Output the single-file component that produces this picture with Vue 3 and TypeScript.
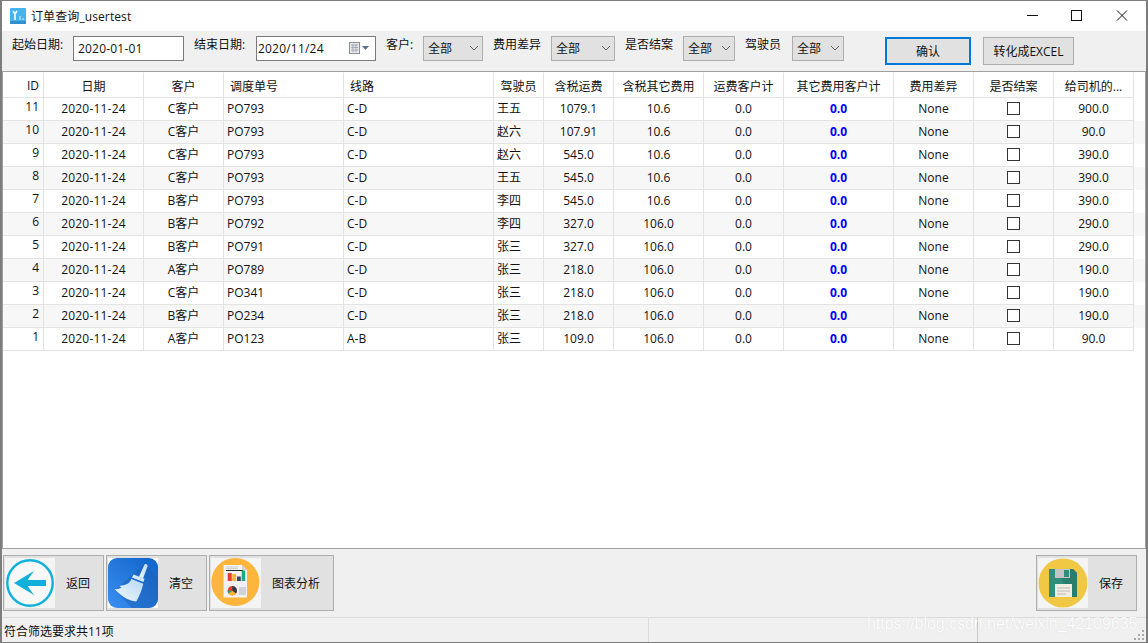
<script setup lang="ts">
interface Row { id: number; cust: string; po: string; route: string; driver: string; fee: string; other: string; pay: string }
const heads: string[] = ['ID', '日期', '客户', '调度单号', '线路', '驾驶员', '含税运费', '含税其它费用', '运费客户计', '其它费用客户计', '费用差异', '是否结案', '给司机的...']
const rows: Row[] = [
  { id: 11, cust: 'C客户', po: 'PO793', route: 'C-D', driver: '王五', fee: '1079.1', other: '10.6', pay: '900.0' },
  { id: 10, cust: 'C客户', po: 'PO793', route: 'C-D', driver: '赵六', fee: '107.91', other: '10.6', pay: '90.0' },
  { id: 9, cust: 'C客户', po: 'PO793', route: 'C-D', driver: '赵六', fee: '545.0', other: '10.6', pay: '390.0' },
  { id: 8, cust: 'C客户', po: 'PO793', route: 'C-D', driver: '王五', fee: '545.0', other: '10.6', pay: '390.0' },
  { id: 7, cust: 'B客户', po: 'PO793', route: 'C-D', driver: '李四', fee: '545.0', other: '10.6', pay: '390.0' },
  { id: 6, cust: 'B客户', po: 'PO792', route: 'C-D', driver: '李四', fee: '327.0', other: '106.0', pay: '290.0' },
  { id: 5, cust: 'B客户', po: 'PO791', route: 'C-D', driver: '张三', fee: '327.0', other: '106.0', pay: '290.0' },
  { id: 4, cust: 'A客户', po: 'PO789', route: 'C-D', driver: '张三', fee: '218.0', other: '106.0', pay: '190.0' },
  { id: 3, cust: 'C客户', po: 'PO341', route: 'C-D', driver: '张三', fee: '218.0', other: '106.0', pay: '190.0' },
  { id: 2, cust: 'B客户', po: 'PO234', route: 'C-D', driver: '张三', fee: '218.0', other: '106.0', pay: '190.0' },
  { id: 1, cust: 'A客户', po: 'PO123', route: 'A-B', driver: '张三', fee: '109.0', other: '106.0', pay: '90.0' },
]
</script>

<template>
  <div class="win">
    <header class="title">
      <svg class="logo" width="16" height="16" viewBox="0 0 16 16">
        <rect width="16" height="16" rx="1" fill="#45b4ee" />
        <rect y="13" width="16" height="3" fill="#2f8fd0" />
        <path d="M3 3l2 3 2-3M5 6v6" stroke="#fff" stroke-width="1.6" fill="none" />
        <path d="M9 11h2M12 11h2M9 9h2" stroke="#dff2fc" stroke-width="1.2" />
      </svg>
      <span class="title-text">订单查询_usertest</span>
      <div class="caps">
        <svg width="46" height="31" viewBox="0 0 46 31"><path d="M19 15.500h11" stroke="#111" /></svg>
        <svg width="46" height="31" viewBox="0 0 46 31"><rect x="17.500" y="10.500" width="10" height="10" fill="none" stroke="#111" /></svg>
        <svg width="46" height="31" viewBox="0 0 46 31"><path d="M17 10.500l10 10M27 10.500l-10 10" stroke="#111" /></svg>
      </div>
    </header>

    <div class="toolbar">
      <span class="lb l1">起始日期:</span>
      <div class="field f1">2020-01-01</div>
      <span class="lb l2">结束日期:</span>
      <div class="field f2">
        <span>2020/11/24</span>
        <svg class="cal" width="24" height="14" viewBox="0 0 24 14">
          <rect x="1.500" y="1.500" width="10" height="11" fill="#e8e8ec" stroke="#8a8f98" />
          <path d="M3 4h7M3 6.500h7M3 9h7M5 3v8M8 3v8" stroke="#a8acb4" />
          <path d="M14 5h7l-3.500 4z" fill="#5a6f8c" />
        </svg>
      </div>
      <span class="lb l3">客户:</span>
      <div class="combo c1">全部<svg width="10" height="6" viewBox="0 0 10 6"><path d="M1 1l4 4 4-4" fill="none" stroke="#606060" /></svg></div>
      <span class="lb l4">费用差异</span>
      <div class="combo c2">全部<svg width="10" height="6" viewBox="0 0 10 6"><path d="M1 1l4 4 4-4" fill="none" stroke="#606060" /></svg></div>
      <span class="lb l5">是否结案</span>
      <div class="combo c3">全部<svg width="10" height="6" viewBox="0 0 10 6"><path d="M1 1l4 4 4-4" fill="none" stroke="#606060" /></svg></div>
      <span class="lb l6">驾驶员</span>
      <div class="combo c4">全部<svg width="10" height="6" viewBox="0 0 10 6"><path d="M1 1l4 4 4-4" fill="none" stroke="#606060" /></svg></div>
      <button class="btn ok">确认</button>
      <button class="btn xl">转化成EXCEL</button>
    </div>

    <main class="table">
      <div class="row head">
        <div v-for="(h, i) in heads" :key="h" class="cell" :class="[`k${i}`, { tl: i === 3 || i === 4 }]">{{ h }}</div>
      </div>
      <div v-for="(r, idx) in rows" :key="r.id" class="row body" :class="{ alt: idx % 2 === 1 }">
        <div class="cell k0 idc">{{ r.id }}</div>
        <div class="cell k1 num">2020-11-24</div>
        <div class="cell k2">{{ r.cust }}</div>
        <div class="cell k3 left">{{ r.po }}</div>
        <div class="cell k4 left">{{ r.route }}</div>
        <div class="cell k5 left">{{ r.driver }}</div>
        <div class="cell k6">{{ r.fee }}</div>
        <div class="cell k7">{{ r.other }}</div>
        <div class="cell k8">0.0</div>
        <div class="cell k9 blue">0.0</div>
        <div class="cell k10">None</div>
        <div class="cell k11"><span class="check"></span></div>
        <div class="cell k12">{{ r.pay }}</div>
      </div>
    </main>

    <div class="actions">
      <button class="act w1">
        <span class="pic">
          <svg width="50" height="50" viewBox="0 0 50 50">
            <circle cx="25" cy="25" r="22.700" fill="#f8f8f8" stroke="#0fb0da" stroke-width="2.400" />
            <path d="M9 25L29 13L22.500 22H41V28H22.500L29 37Z" fill="#0fb0da" />
          </svg>
        </span>
        <span class="cap">返回</span>
      </button>
      <button class="act w1">
        <span class="pic white">
          <svg width="50" height="50" viewBox="0 0 50 50">
            <defs>
              <linearGradient id="bg" x1="0" y1="1" x2="1" y2="0">
                <stop offset="0" stop-color="#3b8ff0" />
                <stop offset="1" stop-color="#0f62c8" />
              </linearGradient>
              <linearGradient id="br" x1="0" y1="1" x2="1" y2="0">
                <stop offset="0" stop-color="#f0f7fd" />
                <stop offset="1" stop-color="#b8d9f5" />
              </linearGradient>
            </defs>
            <rect width="50" height="50" rx="9" fill="url(#bg)" />
            <path d="M7 32L38 5 50 20v21a9 9 0 0 1-9 9H24z" fill="#1a5fb4" opacity=".45" />
            <path d="M36.500 6.500c1.500-1 3.500 0 3 2l-4.500 12-4-1.800z" fill="url(#br)" />
            <path d="M25.500 16.500l11 4.200-1 3.200-11.500-4.500z" fill="url(#br)" />
            <path d="M23.300 21l12 4.800c-1.500 7-4.500 13-7 17.800-8-1-16.500-6-21.500-12.600 3 .5 5.500-.5 7-2-1 0-2-.5-2.500-1 6-1 10.500-2 12-7z" fill="url(#br)" />
          </svg>
        </span>
        <span class="cap">清空</span>
      </button>
      <button class="act w2">
        <span class="pic">
          <svg width="50" height="50" viewBox="0 0 50 50">
            <circle cx="24.300" cy="24" r="24" fill="#fdb53c" />
            <path d="M12.500 7H31l5 5v27.500H12.500z" fill="#f2f2f2" />
            <path d="M31 7l5 5h-5z" fill="#cfcfcf" />
            <path d="M15 9h12M15 10.500h12" stroke="#c8c8c8" stroke-width=".8" />
            <path d="M15 12.500h17" stroke="#222" stroke-width="1" />
            <rect x="16.700" y="15" width="4" height="8" fill="#ef3b2d" />
            <rect x="21.300" y="16" width="3.800" height="7" fill="#f7b731" />
            <rect x="26" y="18.500" width="3.800" height="4.500" fill="#3b4a5a" />
            <rect x="30.700" y="12.500" width="3.500" height="10.500" fill="#1fa884" />
            <circle cx="21.300" cy="32.700" r="4.700" fill="#ef3b2d" />
            <path d="M21.300 32.700v-4.700a4.700 4.700 0 0 1 3.700 7.600z" fill="#2d3a48" />
            <path d="M21.300 32.700l3.700 2.900a4.700 4.700 0 0 1-7.400 0z" fill="#f7b731" />
            <path d="M17.600 35.600a4.700 4.700 0 0 1-1-2.900h4.700z" fill="#1fa884" />
            <path d="M28 30h7M28 32h7M28 34h7M28 36h7" stroke="#a9b4bd" stroke-width="1" />
          </svg>
        </span>
        <span class="cap">图表分析</span>
      </button>
      <button class="act w1 push">
        <span class="pic">
          <svg width="50" height="50" viewBox="0 0 50 50">
            <circle cx="25" cy="25" r="24.500" fill="#f0c844" />
            <path d="M11 11h24l4 4v24H11z" fill="#2f8f7e" />
            <path d="M20 11h15l4 4v24H31z" fill="#267566" opacity=".7" />
            <rect x="17" y="11" width="15" height="9" fill="#c4c4c4" />
            <rect x="26" y="12" width="5" height="7" fill="#2f8f7e" />
            <rect x="17" y="26" width="17" height="13" fill="#f1ede2" />
            <path d="M19 30h13M19 33h13M19 36h9" stroke="#b4b4b0" stroke-width=".9" />
          </svg>
        </span>
        <span class="cap">保存</span>
      </button>
    </div>

    <footer class="status">
      <span>符合筛选要求共11项</span>
      <i class="sep s1"></i>
      <i class="sep s2"></i>
      <span class="wm">https://blog.csdn.net/weixin_42109635</span>
      <svg class="grip" width="12" height="12" viewBox="0 0 12 12">
        <path d="M9 1h2v2H9zM5 5h2v2H5zM9 5h2v2H9zM1 9h2v2H1zM5 9h2v2H5zM9 9h2v2H9z" fill="#a8a8a8" />
      </svg>
    </footer>
  </div>
</template>

<style>
html, body { margin: 0; padding: 0; background: #fff; }
</style>

<style scoped>
* { box-sizing: border-box; }
.win {
  width: 1148px; height: 643px; display: flex; flex-direction: column;
  border: 1px solid #7d7d7d; border-left-width: 2px; border-right-width: 2px;
  background: #f0f0f0; color: #111; overflow: hidden;
  font: 12px "Open Sans", "Noto Sans CJK SC", sans-serif;
}
.title { height: 30px; flex: none; display: flex; align-items: center; background: #fff; padding-left: 8px; padding-bottom: 1px; }
.logo { flex: none; margin-top: 0; }
.title-text { margin-left: 5px; font-size: 12px; letter-spacing: .1px; }
.caps { margin-left: auto; display: flex; margin-right: 0; }
.caps svg { display: block; margin-left: 0; }
.toolbar { position: relative; height: 40px; flex: none; display: flex; align-items: flex-start; padding: 5px 0 0 10px; }
.lb { line-height: 16px; white-space: nowrap; margin-top: 1px; font-size: 12px; }
.l1 { width: 61px; }
.field { height: 25px; border: 1px solid #7a7a7a; background: #fff; display: flex; align-items: center; font-size: 12px; letter-spacing: .2px; padding-bottom: 1px; }
.f1 { width: 111px; padding-left: 4px; margin-right: 10px; }
.l2 { width: 62px; }
.f2 { width: 120px; padding-left: 1px; justify-content: space-between; margin-right: 10px; }
.cal { margin-right: 3px; }
.l3 { width: 37px; }
.combo {
  height: 25px; border: 1px solid #adadad; background: #e1e1e1; display: flex; align-items: center;
  justify-content: space-between; padding: 0 3px 1px 4px; font-size: 12px;
}
.c1 { width: 60px; margin-right: 10px; }
.l4 { width: 58px; }
.c2 { width: 64px; margin-right: 10px; }
.l5 { width: 58px; }
.c3 { width: 52px; margin-right: 10px; }
.l6 { width: 47px; }
.c4 { width: 52px; margin-right: 41px; }
.btn {
  height: 28px; margin-top: 1px; padding: 0; background: #e1e1e1; border: 1px solid #adadad; color: #111;
  font: 12px "Open Sans", "Noto Sans CJK SC", sans-serif;
}
.ok { width: 86px; border: 2px solid #0078d7; margin-right: 12px; }
.xl { width: 91px; }
.table { flex: 1 1 0; min-height: 0; background: #fff; border: 1px solid #a0a0a0; }
.row { display: flex; }
.head { height: 26px; }
.body { height: 23px; }
.alt { background: #f7f7f7; }
.cell {
  flex: none; display: flex; align-items: center; justify-content: center;
  border-right: 1px solid #e3e3e3; border-bottom: 1px solid #e3e3e3; white-space: nowrap; font-size: 12px;
  padding-bottom: 2px;
}
.head .cell { padding-top: 1px; padding-bottom: 0; border-top: 1px solid #fff; }
.k0 { width: 41px; justify-content: flex-end; padding-right: 4px; }
.k1 { width: 100px; }
.num { letter-spacing: .2px; }
.k2 { width: 80px; }
.k3 { width: 120px; }
.k4 { width: 150px; }
.k5 { width: 50px; }
.k6 { width: 70px; }
.k7 { width: 90px; }
.k8 { width: 80px; }
.k9 { width: 110px; }
.k10 { width: 80px; }
.k11 { width: 80px; }
.k12 { width: 80px; }
.left, .tl { justify-content: flex-start; padding-left: 3px; }
.tl { padding-left: 6px; }
.idc { align-items: flex-start; padding: 0 4px 0 0; }
.blue { color: #0000ff; font-weight: 700; }
.check { width: 13px; height: 13px; border: 1px solid #333; background: #fff; }
.actions { height: 68px; flex: none; display: flex; gap: 2px; padding: 6px 9px 0 1px; align-items: flex-start; }
.act {
  height: 56px; padding: 2px 0 2px 1px; display: flex; align-items: center; background: #e1e1e1; border: 1px solid #adadad;
  color: #111; font: 12px "Open Sans", "Noto Sans CJK SC", sans-serif;
}
.w1 { width: 101px; }
.w2 { width: 125px; }
.push { margin-left: auto; }
.pic { width: 50px; height: 50px; flex: none; background: #f4f4f4; display: block; }
.pic svg { display: block; }
.white { background: #fff; }
.cap { flex: 1; text-align: center; padding-right: 2px; }
.status { position: relative; height: 25px; flex: none; border-top: 1px solid #dcdcdc; display: flex; align-items: center; padding-left: 2px; font-size: 12px; padding-top: 1px; }
.sep { position: absolute; top: 0; bottom: 0; width: 1px; background: #dcdcdc; }
.s1 { left: 646px; }
.s2 { left: 975px; background: #c8c8c8; }
.wm { position: absolute; left: 865px; top: -3px; color: #fff; opacity: .8; font: 16px "Liberation Sans", sans-serif; letter-spacing: -.05px; text-shadow: 0 0 1px rgba(0, 0, 0, .15); white-space: nowrap; }
.grip { position: absolute; right: 1px; bottom: 1px; }
</style>
